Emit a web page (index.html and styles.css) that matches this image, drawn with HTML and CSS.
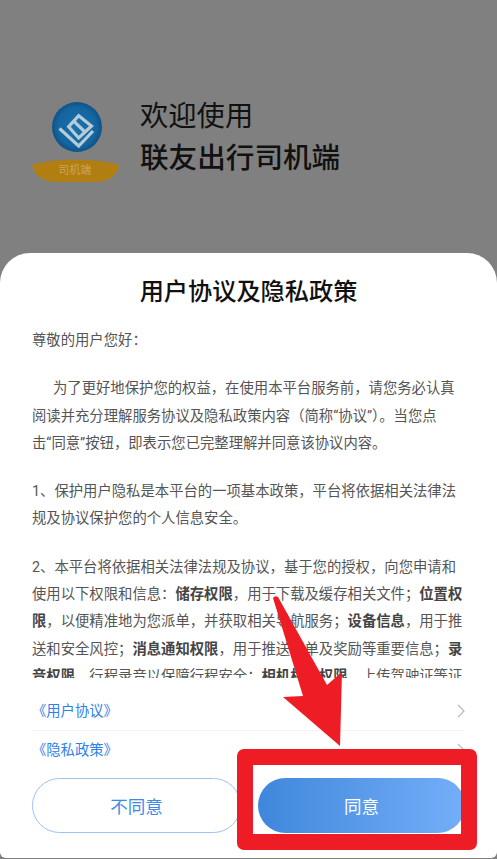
FILE: index.html
```html
<!DOCTYPE html>
<html lang="zh">
<head>
<meta charset="utf-8">
<title>联友出行司机端</title>
<link rel="stylesheet" href="styles.css">
</head>
<body>
<div class="page">
  <header class="welcome">
    <svg class="logo" viewBox="0 0 90 90" width="90" height="90" aria-label="司机端">
      <defs>
        <radialGradient id="disc" cx="50%" cy="50%" r="52%">
          <stop offset="0" stop-color="#1a70ad"/>
          <stop offset="0.75" stop-color="#15659f"/>
          <stop offset="1" stop-color="#0e4f82"/>
        </radialGradient>
      </defs>
      <circle cx="45" cy="26" r="25" fill="url(#disc)"/>
      <g fill="none" stroke="#b4ccd8" stroke-width="3.2" stroke-linejoin="miter">
        <path d="M27.5 27.5 L46.7 45 L61 30"/>
        <path d="M36.7 25.7 L46.7 14.7 L59.5 25 L46.7 37 Z"/>
        <path d="M41.7 20.2 L53 31"/>
      </g>
      <path d="M0 64 C20 57 66 57 87 64 C85 74 78 81 62 81 L26 81 C10 81 2 74 0 64 Z" fill="#b17e12"/>
      <text x="42.7" y="73" class="logo-text" text-anchor="middle">司机端</text>
    </svg>
    <div class="welcome-text">
      <div class="welcome-line">欢迎使用</div>
      <div class="welcome-name">联友出行司机端</div>
    </div>
  </header>

  <section class="sheet">
    <h1 class="sheet-title">用户协议及隐私政策</h1>
    <div class="policy">
      <p>尊敬的用户您好：</p>
      <p class="indent">为了更好地保护您的权益，在使用本平台服务前，请您务必认真阅读并充分理解服务协议及隐私政策内容（简称“协议”）。当您点<br>击“同意”按钮，即表示您已完整理解并同意该协议内容。</p>
      <p>1、保护用户隐私是本平台的一项基本政策，平台将依据相关法律法规及协议保护您的个人信息安全。</p>
      <p>2、本平台将依据相关法律法规及协议，基于您的授权，向您申请和使用以下权限和信息：<b>储存权限</b>，用于下载及缓存相关文件；<b>位置权限</b>，以便精准地为您派单，并获取相关导航服务；<b>设备信息</b>，用于推送和安全风控；<b>消息通知权限</b>，用于推送派单及奖励等重要信息；<b>录音权限</b>，行程录音以保障行程安全；<b>相机相册权限</b>，上传驾驶证等证</p>
    </div>
    <ul class="links">
      <li class="link-row">
        <a class="link">《用户协议》</a>
        <svg class="chevron" viewBox="0 0 8 14" width="8" height="14"><path d="M1 1 L7 7 L1 13" fill="none" stroke="#b9b9b9" stroke-width="1.2"/></svg>
      </li>
      <li class="link-row">
        <a class="link">《隐私政策》</a>
        <svg class="chevron" viewBox="0 0 8 14" width="8" height="14"><path d="M1 1 L7 7 L1 13" fill="none" stroke="#b9b9b9" stroke-width="1.2"/></svg>
      </li>
    </ul>
    <div class="actions">
      <button class="btn btn-decline">不同意</button>
      <button class="btn btn-agree">同意</button>
    </div>
  </section>

  <div class="mark-box"></div>
  <svg class="mark-arrow" viewBox="0 0 497 859" width="497" height="859">
    <path d="M273 598 Q275 595 278 597 L327 685 L342 672 L340 746 L283 697 L303 696 Z" fill="#ee1c25"/>
  </svg>
</div>
</body>
</html>
```

FILE: styles.css
```css
* { box-sizing: border-box; }
html, body { margin: 0; padding: 0; }
body {
  font-family: Roboto, "Noto Sans CJK SC", sans-serif;
  background: #808080;
  overflow: hidden;
}
.page {
  position: relative;
  width: 497px;
  height: 859px;
  overflow: hidden;
  background: #808080;
}
.welcome {
  height: 253px;
  padding: 101px 0 0 32px;
  display: flex;
  align-items: flex-start;
}
.logo { display: block; flex: none; }
.logo-text { font-size: 11px; fill: #cba55f; font-family: "Noto Sans CJK SC", sans-serif; }
.welcome-text { margin: -3px 0 0 18px; color: #111; }
.welcome-line { font-size: 28.3px; line-height: 38px; font-weight: 400; }
.welcome-name { font-size: 28.6px; line-height: 45px; font-weight: 500; }
.sheet {
  height: 605px;
  background: #fff;
  border-radius: 30px 30px 6px 6px;
  padding: 22px 32px 0;
  display: flex;
  flex-direction: column;
}
.sheet-title {
  margin: 0 0 18px;
  text-align: center;
  font-size: 24.2px;
  line-height: 34px;
  font-weight: 500;
  color: #111;
}
.policy {
  height: 351px;
  overflow: hidden;
  font-size: 14.35px;
  line-height: 27.3px;
  color: #555;
}
.policy p { margin: 0 0 21px; }
.policy .indent { text-indent: 21px; }
.policy b { font-weight: 700; color: #444; }
.links { list-style: none; margin: 14px 0 0; padding: 0; }
.link-row {
  height: 39px;
  display: flex;
  align-items: center;
  justify-content: space-between;
  border-bottom: 1px solid #f3f3f3;
}
.link-row:last-child { border-bottom: 0; height: 38px; }
.link { font-size: 14.3px; line-height: 36px; color: #2f80ee; }
.actions {
  margin-top: 9px;
  display: flex;
  gap: 17px;
}
.btn {
  flex: 1;
  height: 55px;
  border-radius: 28px;
  font-family: inherit;
  font-size: 17.5px;
  font-weight: 400;
  padding: 0;
}
.btn-decline {
  background: #fff;
  border: 1px solid #9cc3f0;
  color: #3d8be8;
}
.btn-agree {
  background: linear-gradient(90deg, #3f87db, #74aef8);
  border: 0;
  color: #fff;
}
.mark-box {
  position: absolute;
  left: 237px;
  top: 749px;
  width: 240px;
  height: 101px;
  border: 16px solid #ee1c25;
  border-radius: 7px;
}
.mark-arrow {
  position: absolute;
  left: 0;
  top: 0;
  pointer-events: none;
}
```
